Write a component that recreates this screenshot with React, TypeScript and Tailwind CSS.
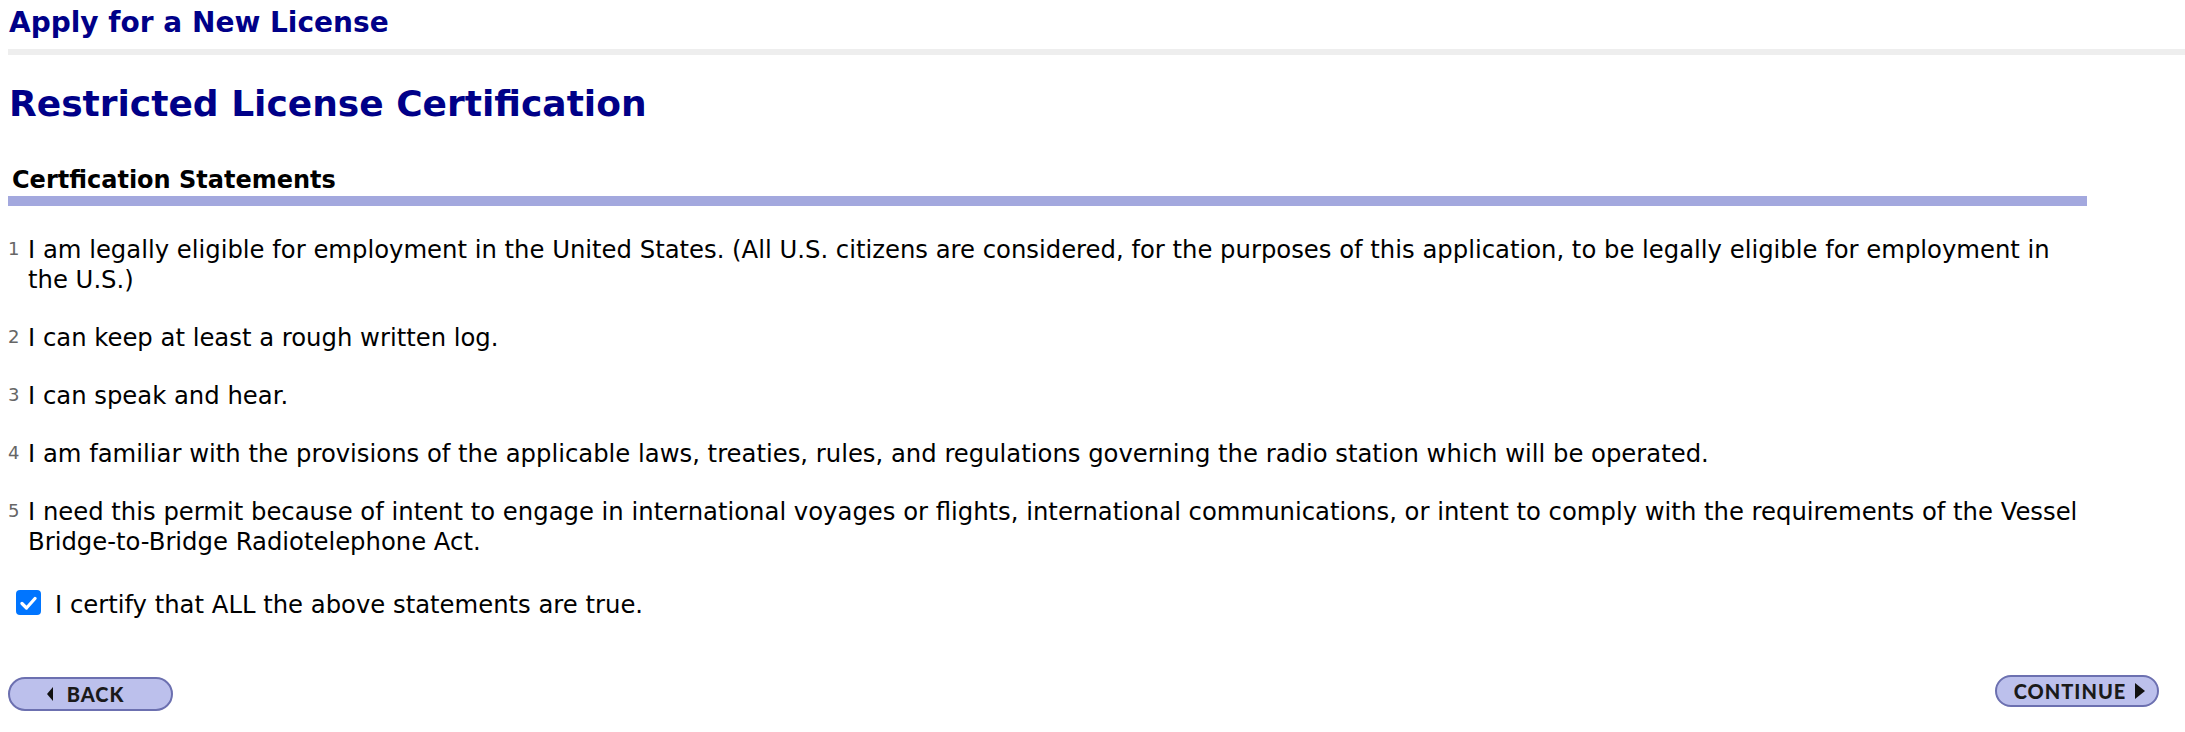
import { useState } from "react";

// "\n" marks where the original page wraps each statement
const statements = [
  "I am legally eligible for employment in the United States. (All U.S. citizens are considered, for the purposes of this application, to be legally eligible for employment in\nthe U.S.)",
  "I can keep at least a rough written log.",
  "I can speak and hear.",
  "I am familiar with the provisions of the applicable laws, treaties, rules, and regulations governing the radio station which will be operated.",
  "I need this permit because of intent to engage in international voyages or flights, international communications, or intent to comply with the requirements of the Vessel\nBridge-to-Bridge Radiotelephone Act.",
];

function Triangle({ dir, w, h }: { dir: "left" | "right"; w: number; h: number }) {
  return (
    <svg width={w} height={h} viewBox={`0 0 ${w} ${h}`} className="shrink-0">
      {dir === "left" ? (
        <polygon points={`${w},0 ${w},${h} 0,${h / 2}`} fill="#111" />
      ) : (
        <polygon points={`0,0 0,${h} ${w},${h / 2}`} fill="#111" />
      )}
    </svg>
  );
}

export default function App() {
  const [certified, setCertified] = useState(true);

  return (
    <div className="min-h-screen bg-white pl-2 pt-[6px] font-['DejaVu_Sans',sans-serif] text-black">
      <h2 className="pl-[1px] text-[28px] font-bold leading-[34px] text-[#000088]">
        Apply for a New License
      </h2>
      <div className="mt-[9px] h-[6px] bg-[#eeeeee]" />

      <h1 className="mt-[27px] pl-[1px] text-[36px] font-bold leading-[44px] text-[#000088]">
        Restricted License Certification
      </h1>

      <div className="mt-[39px] w-[2079px]">
        <div className="px-1 text-[24px] font-bold leading-[31px]">Certfication Statements</div>
        <div className="h-[10px] bg-[#a3a8de]" />
      </div>

      <ol className="mt-[29px] space-y-[28px]">
        {statements.map((s, i) => (
          <li key={i} className="flex items-start">
            <span className="w-[20px] shrink-0 text-[18px] leading-[28px] text-[#666666]">{i + 1}</span>
            <span className="whitespace-pre-line text-[24.3px] leading-[30px]">{s}</span>
          </li>
        ))}
      </ol>

      <label className="mt-[33px] flex cursor-pointer items-start gap-[14px] pl-[8px]">
        <span
          onClick={() => setCertified(!certified)}
          className={`flex h-[25px] w-[25px] shrink-0 items-center justify-center rounded-[4px] ${
            certified ? "bg-[#0075ff]" : "border-2 border-[#767676] bg-white"
          }`}
        >
          {certified && (
            <svg width="17" height="14" viewBox="0 0 17 14">
              <path d="M2 7.5 L6.5 12 L15 2.5" stroke="white" strokeWidth="3.2" fill="none" strokeLinecap="round" strokeLinejoin="round" />
            </svg>
          )}
        </span>
        <span className="text-[24.3px] leading-[30px]">I certify that ALL the above statements are true.</span>
      </label>

      <div className="mt-[55px] flex items-start justify-between pr-[26px]">
        <button className="mt-[2px] flex h-[34px] w-[165px] items-center justify-center gap-[14px] rounded-full border-2 border-[#6c70b0] bg-[#bcc0ec] pr-[10px] font-['Lato',sans-serif] text-[20px] font-black tracking-[1px] text-[#1a1a1a]">
          <Triangle dir="left" w={6} h={14} />
          BACK
        </button>
        <button className="flex h-[32px] w-[164px] items-center justify-center gap-[9px] rounded-full border-2 border-[#6c70b0] bg-[#bcc0ec] pl-[5px] font-['Lato',sans-serif] text-[20px] font-black tracking-[1px] text-[#1a1a1a]">
          CONTINUE
          <Triangle dir="right" w={10} h={16} />
        </button>
      </div>
    </div>
  );
}
